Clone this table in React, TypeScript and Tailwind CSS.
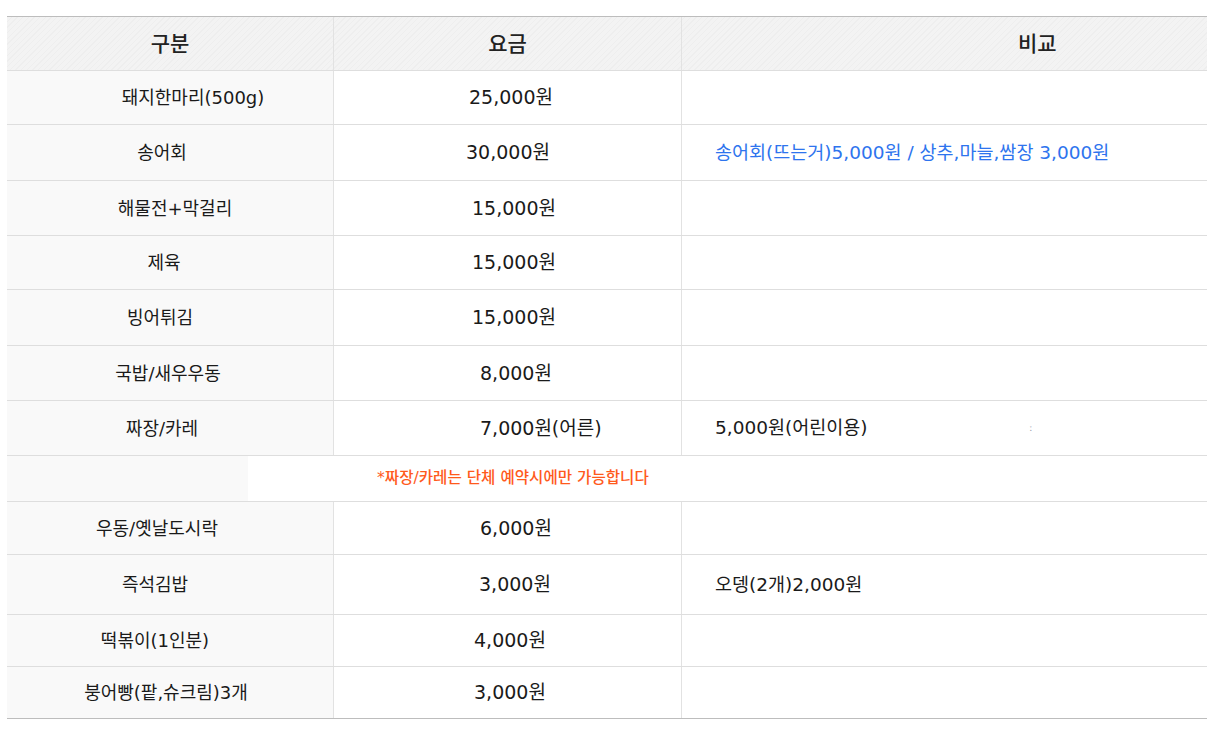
import React from 'react';

type Row = {
    name: string;
    namePad: string;
    price: string;
    note?: string;
    noteBlue?: boolean;
    h: string;
    pricePl: string;
    mark?: boolean;
};

const rowsTop: Row[] = [
    { name: '돼지한마리(500g)', namePad: 'pl-[46px]', price: '25,000원', h: 'h-[54px]', pricePl: 'pl-[135px]' },
    { name: '송어회', namePad: 'pr-[16px]', price: '30,000원', note: '송어회(뜨는거)5,000원 / 상추,마늘,쌈장 3,000원', noteBlue: true, h: 'h-[56px]', pricePl: 'pl-[132px]' },
    { name: '해물전+막걸리', namePad: 'pl-[10px]', price: '15,000원', h: 'h-[55px]', pricePl: 'pl-[138px]' },
    { name: '제육', namePad: 'pr-[12px]', price: '15,000원', h: 'h-[54px]', pricePl: 'pl-[138px]' },
    { name: '빙어튀김', namePad: 'pr-[20px]', price: '15,000원', h: 'h-[56px]', pricePl: 'pl-[138px]' },
    { name: '국밥/새우우동', namePad: 'pr-[4px]', price: '8,000원', h: 'h-[55px]', pricePl: 'pl-[146px]' },
    { name: '짜장/카레', namePad: 'pr-[16px]', price: '7,000원(어른)', note: '5,000원(어린이용)', h: 'h-[55px]', pricePl: 'pl-[146px]', mark: true },
];

const rowsBottom: Row[] = [
    { name: '우동/옛날도시락', namePad: 'pr-[26px]', price: '6,000원', h: 'h-[53px]', pricePl: 'pl-[146px]' },
    { name: '즉석김밥', namePad: 'pr-[30px]', price: '3,000원', note: '오뎅(2개)2,000원', h: 'h-[60px]', pricePl: 'pl-[145px]' },
    { name: '떡볶이(1인분)', namePad: 'pr-[30px]', price: '4,000원', h: 'h-[52px]', pricePl: 'pl-[140px]' },
    { name: '붕어빵(팥,슈크림)3개', namePad: 'pr-[8px]', price: '3,000원', h: 'h-[51px]', pricePl: 'pl-[140px]' },
];

const font = { fontFamily: "'DejaVu Sans', 'Noto Sans CJK KR', sans-serif" };

function PriceRow({ row, last }: { row: Row; last?: boolean }) {
    return (
        <div className={`flex ${row.h} ${last ? '' : 'border-b border-[#dedede]'}`}>
            {/* 구분 */}
            <div className={`w-[327px] shrink-0 bg-[#f9f9f9] border-r border-[#e2e2e2] flex items-center justify-center ${row.namePad} text-[18px] text-[#1a1a1a]`}>
                {row.name}
            </div>
            {/* 요금 */}
            <div className={`w-[348px] shrink-0 border-r border-[#e2e2e2] flex items-center ${row.pricePl} text-[19px] text-[#1a1a1a]`}>
                {row.price}
            </div>
            {/* 비교 */}
            <div className="flex-1 flex items-center pl-[33px]">
                {row.note && (
                    <span className={row.noteBlue ? 'text-[18.5px] text-[#2e74ee]' : 'text-[18.5px] text-[#1a1a1a]'}>{row.note}</span>
                )}
                {row.mark && <span className="ml-[162px] text-[9px] text-gray-400 leading-none">ː</span>}
            </div>
        </div>
    );
}

export default function App() {
    return (
        <div className="w-[1215px] h-[731px] bg-white pt-[16px] pl-[7px]" style={font}>
            <div className="w-[1200px] border-t border-b border-[#bdbdbd]">
                {/* Header */}
                <div className="flex h-[54px] border-b border-[#dedede] bg-[repeating-linear-gradient(135deg,#f3f3f3_0px,#f3f3f3_3px,#eeeeee_3px,#eeeeee_4px)] text-[21px] font-medium text-[#222]">
                    <div className="w-[327px] shrink-0 border-r border-[#e2e2e2] flex items-center justify-center pt-[2px]">구분</div>
                    <div className="w-[348px] shrink-0 border-r border-[#e2e2e2] flex items-center justify-center pt-[2px]">요금</div>
                    <div className="flex-1 flex items-center pl-[336px] pt-[2px]">비교</div>
                </div>

                {rowsTop.map((r, i) => (
                    <PriceRow key={i} row={r} />
                ))}

                {/* Notice */}
                <div className="flex h-[46px] border-b border-[#dedede]">
                    <div className="w-[241px] shrink-0 bg-[#f9f9f9]"></div>
                    <div className="flex-1 flex items-center pl-[129px] text-[15.6px] font-medium text-[#ff5a1c]">
                        *짜장/카레는 단체 예약시에만 가능합니다
                    </div>
                </div>

                {rowsBottom.map((r, i) => (
                    <PriceRow key={i} row={r} last={i === rowsBottom.length - 1} />
                ))}
            </div>
        </div>
    );
}
